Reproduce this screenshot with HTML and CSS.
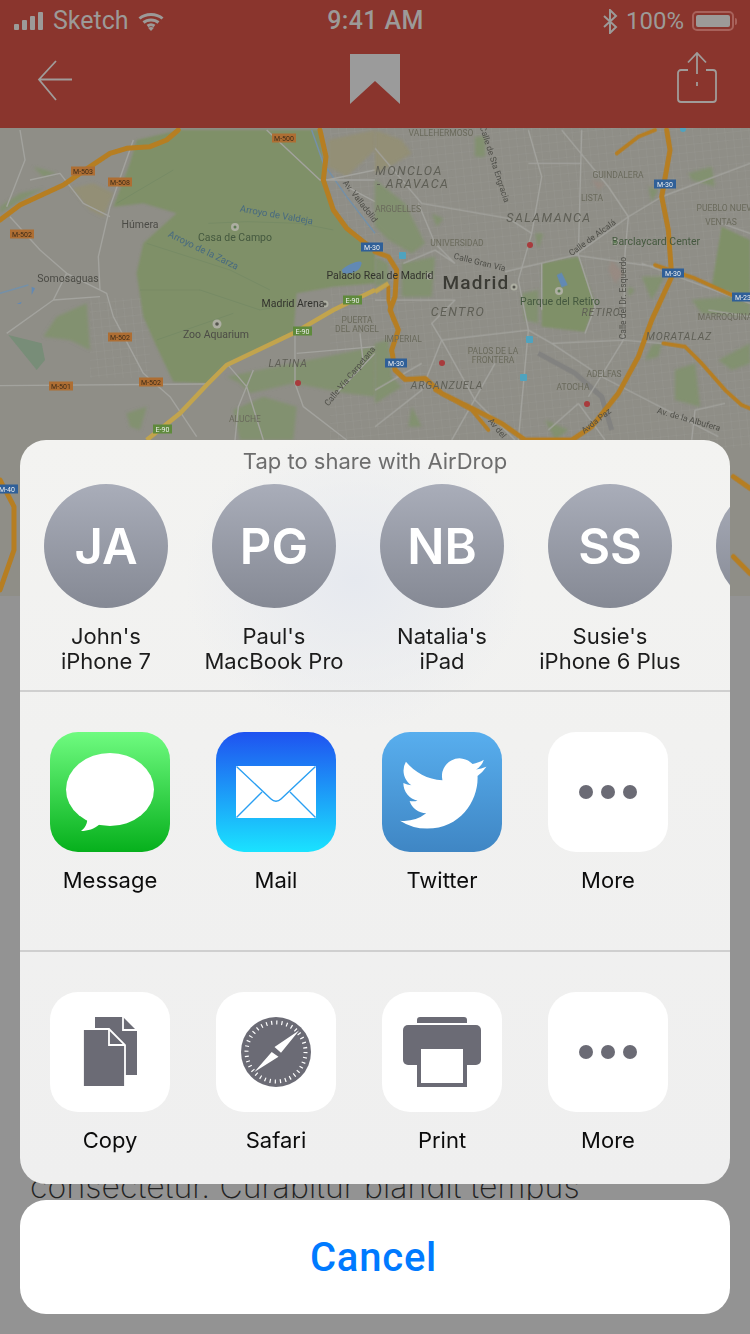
FILE: index.html
```html
<!DOCTYPE html>
<html lang="en">
<head>
<meta charset="utf-8">
<title>Share sheet</title>
<link rel="stylesheet" href="styles.css">
</head>
<body>
<div class="screen">
  <header class="topbar">
    <div class="status">
      <div class="status-left">
        <svg class="signal" width="30" height="18" viewBox="0 0 30 18"><rect x="0" y="12" width="5" height="6" rx="1"/><rect x="8" y="8" width="5" height="10" rx="1"/><rect x="16" y="4" width="5" height="14" rx="1"/><rect x="24" y="0" width="5" height="18" rx="1"/></svg>
        <span class="carrier">Sketch</span>
        <svg class="wifi" width="26" height="19" viewBox="0 0 26 19"><path d="M1.500 6.500C7.500 1 18.500 1 24.500 6.500" /><path d="M5.500 10.500C9.500 7 16.500 7 20.500 10.500"/><path d="M9.500 14C11.500 12.500 14.500 12.500 16.500 14"/><path class="wifi-dot" d="M13 19l-3-3.300c2-1 4-1 6 0z"/></svg>
      </div>
      <div class="clock">9:41 AM</div>
      <div class="status-right">
        <svg class="bt" width="17" height="25" viewBox="0 0 17 25"><path d="M2 7l12 11-6 6V1l6 6L2 18"/></svg>
        <span class="pct">100%</span>
        <span class="battery"><span class="battery-fill"></span></span>
        <span class="nub"></span>
      </div>
    </div>
    <nav class="nav">
      <svg class="nav-icon back" width="36" height="42" viewBox="0 0 36 42"><path d="M19 2L2 20.500 19 41M2 20.500H35"/></svg>
      <svg class="bookmark" width="50" height="50" viewBox="0 0 50 50"><path d="M0 0H50V50L25 27 0 50z"/></svg>
      <svg class="nav-icon" width="42" height="52" viewBox="0 0 42 52"><path d="M21 1V22M21 30V34M12 10.500L21 1l9 9.500M12 18H5a3 3 0 0 0-3 3V47a3 3 0 0 0 3 3H37a3 3 0 0 0 3-3V21a3 3 0 0 0-3-3H30"/></svg>
    </nav>
  </header>

  <svg class="map" width="750" height="468" viewBox="0 0 750 468">
    <defs>
      <pattern id="grid" width="8" height="8" patternUnits="userSpaceOnUse" patternTransform="rotate(-6)"><path d="M0 0H8M0 0V8" class="grid-line"/></pattern>
      <filter id="soft" x="-5%" y="-5%" width="110%" height="110%"><feGaussianBlur stdDeviation="0.7"/></filter>
      <filter id="softer" x="-5%" y="-5%" width="110%" height="110%"><feGaussianBlur stdDeviation="0.25"/></filter>
      <filter id="patch" x="-10%" y="-10%" width="120%" height="120%"><feGaussianBlur stdDeviation="5"/></filter>
      <filter id="edge" x="-5%" y="-5%" width="110%" height="110%"><feGaussianBlur stdDeviation="3"/></filter>
    </defs>
    <rect class="land" width="750" height="468"/>
    <g filter="url(#soft)">
      <rect class="city-grid" x="330" y="0" width="420" height="320" fill="url(#grid)"/>
      <rect class="city-grid" x="90" y="170" width="60" height="80" fill="url(#grid)"/>
      <g transform="translate(0,2) scale(.33333)">
        <path class="park" filter="url(#edge)" d="M340 230L390 100 410 30 540 0H960L975 150 1000 240 1090 340 1125 370V460L1000 470 890 490 880 610 680 700 620 760 520 755 470 650 430 560 410 430 430 340 530 250 430 220z"/>
        <path class="patch" filter="url(#patch)" d="M680 740L880 700 1125 650V800L1040 790 880 760 750 790 720 760zM700 840L790 800 890 830 880 930H720zM100 110L170 130 130 140zM0 230L60 190 130 175 40 225 0 250zM380 850L440 830 420 900 390 890z"/>
        <path class="patch" filter="url(#patch)" d="M130 620L170 560 260 520 270 660 210 630z"/>
        <path class="park-teal" d="M25 615L125 640 135 690 110 720z"/>
        <path class="tan" filter="url(#patch)" d="M215 175L280 160 340 190 310 260 270 240zM985 30L1125 0V60L1040 140 985 110z"/>
        <path class="park-line" d="M420 480L600 480 780 540 880 520M440 340L690 420 810 480M470 630L700 550M625 280L740 275 900 280 1000 300M350 220L520 120"/>
        <path class="water" d="M1025 420C1040 405 1085 385 1085 400 1080 420 1070 430 1030 432zM95 470L105 475 95 495zM50 522L65 515 62 522z"/>
        <path class="stream-line" d="M935 0L970 100 1040 200 1125 310M0 490L85 465"/>
        <path class="street" d="M60 0L75 90 40 180 20 230M30 260L120 360 200 430 320 490 340 560 430 730 510 800 590 920M400 30L330 230 295 380 300 480M0 767L620 762M200 430L160 510 20 610M160 510L300 500M680 700L740 770 790 930M760 720L715 830 705 930M885 610V760L910 830 1040 930M990 810L1125 670M890 670L1125 650M800 0L960 150 1125 150M980 150L1125 120M1040 170L1125 215M1080 610L1090 700M90 150L180 130 250 220 330 260"/>
        <path class="road" d="M0 270L60 225 190 165 240 130 330 70 380 55 450 50 500 30 535 0"/>
        <path class="road" d="M960 0L978 80 970 150 1000 240 1040 295 1090 335 1125 360"/>
        <path class="highway" d="M440 930L540 850 620 765 680 705 880 610 1000 540 1125 480"/>
        <path class="road" d="M0 1050L42 1130V1260L0 1380"/>
      </g>
      <g transform="translate(375,2) scale(.33333)">
        <path class="park" filter="url(#edge)" d="M500 400L610 380 660 520 630 605 500 590zM1040 290L1125 330V500L1010 470z"/>
        <path class="patch" filter="url(#patch)" d="M440 490L490 480 490 580 450 570zM0 150L90 220 150 340 110 370 40 330 0 290zM80 400L180 380 170 500 80 500zM0 380L40 400 40 460 0 470zM0 640L40 630 50 740 80 770 0 820zM900 720L960 700 975 830 900 810zM110 830L140 890 100 890zM300 20H330V80H300zM940 130L1010 110 1020 170 950 150zM820 170L850 180 830 215zM950 510L1070 500 1125 520V560L980 550zM800 440L870 440 830 510zM510 870L580 900 540 930zM480 310H505L490 355zM170 250L205 265 185 290zM760 470L780 480 760 500zM1030 690L1125 640V700L1070 720zM860 640L850 680 810 690 830 645z"/>
        <path class="tan" filter="url(#patch)" d="M0 0L80 30 110 70 60 100 0 130z"/>
        <path class="pink" filter="url(#patch)" d="M710 390L745 430 720 460 700 420zM650 150L690 160 670 180z"/>
        <path class="rail" d="M490 670L600 730 680 800 710 900"/>
        <path class="water" d="M545 435L560 428 578 465 560 472z"/>
        <path class="street" d="M0 55L140 220 400 265 470 310 500 140 460 0M130 220L180 340 240 400M390 425L600 375 760 260 860 200 1125 100M600 375L840 410M620 0L610 375 660 530 630 610M760 260L750 370 745 630 640 800M760 260L700 170 560 0M470 310L430 450 460 600 530 640 745 630 860 640M460 600L430 930M500 400V540M85 400L180 360 240 400M0 510H240L170 580 200 630 140 780 0 890M460 600L200 630M200 630L300 810 420 930M360 700L230 930M530 640L680 740 1030 920M610 820L520 900M610 820L690 930M1125 310L1040 280M1000 540L1125 560M800 400L1125 520M1050 820L960 840 950 930M460 100L620 100M140 700L0 780"/>
        <path class="road" d="M0 365L40 380 65 420 60 500 45 540 70 600 50 660 60 720 90 748 150 745 200 790 300 840 380 880 450 930H590L650 890 730 790 790 680 830 570 890 440 880 300 860 200 885 60 875 0"/>
        <path class="road thin" d="M40 470V510L55 570M180 780L290 840 340 900"/>
        <path class="road thin" d="M725 70L790 20 840 0M840 405L960 445 1070 495 1125 505M865 640L930 650 980 700 1050 780 1100 825 1125 835"/>
        <path class="highway" d="M0 485L40 460"/>
        <path class="road" d="M1125 1075L1075 1040M1075 1280L1125 1330"/>
      </g>
    </g>

    <g class="pois" filter="url(#softer)">
      <circle class="red" cx="530" cy="117" r="3"/><circle class="red" cx="442" cy="235" r="3"/><circle class="red" cx="298" cy="255" r="3"/><circle class="red" cx="587" cy="276" r="3"/>
      <rect class="cyan" x="399" y="124" width="7" height="7" rx="1"/><rect class="cyan" x="526" y="208" width="7" height="7" rx="1"/><rect class="cyan" x="520" y="246" width="7" height="7" rx="1"/>
      <circle class="pale" cx="235" cy="99" r="4"/><circle class="pale" cx="559" cy="163" r="4"/><circle class="pale" cx="217" cy="196" r="4.500"/><circle class="pale" cx="615" cy="114" r="3.500"/><circle class="pale" cx="514" cy="159" r="3.500"/><circle class="pale" cx="429" cy="148" r="3.500"/><circle class="pale" cx="325" cy="176" r="3.500"/>
      <circle class="poi-g" cx="235" cy="99" r="1.500"/><circle class="poi-g" cx="559" cy="163" r="1.500"/><circle class="poi-d" cx="217" cy="196" r="1.800"/><circle class="poi-g" cx="615" cy="114" r="1.500"/><circle class="poi-d" cx="514" cy="159" r="1.500"/><circle class="poi-d" cx="429" cy="148" r="1.500"/><circle class="poi-d" cx="325" cy="176" r="1.500"/>
      <circle class="cyan" cx="683" cy="1" r="3"/>
    </g>

    <g class="m-label" filter="url(#softer)">
      <text class="district" x="409" y="47">MONCLOA</text><text class="district" x="413" y="60">- ARAVACA</text>
      <text class="district" x="549" y="94">SALAMANCA</text><text class="district" x="458" y="188">CENTRO</text>
      <text class="district sm" x="601" y="188">RETIRO</text><text class="district sm" x="679" y="212">MORATALAZ</text>
      <text class="district sm" x="288" y="239">LATINA</text><text class="district sm" x="447" y="261">ARGANZUELA</text>
      <text class="hood" x="441" y="8">VALLEHERMOSO</text><text class="hood" x="618" y="50">GUINDALERA</text><text class="hood" x="592" y="73">LISTA</text>
      <text class="hood" x="727" y="83">PUEBLO NUEVO</text><text class="hood" x="721" y="97">VENTAS</text><text class="hood" x="398" y="84">ARGUELLES</text>
      <text class="hood" x="457" y="118">UNIVERSIDAD</text><text class="hood" x="357" y="195">PUERTA</text><text class="hood" x="357" y="204">DEL ANGEL</text>
      <text class="hood" x="725" y="192">MARROQUINA</text><text class="hood" x="403" y="214">IMPERIAL</text><text class="hood" x="493" y="226">PALOS DE LA</text>
      <text class="hood" x="493" y="235">FRONTERA</text><text class="hood" x="573" y="262">ATOCHA</text><text class="hood" x="604" y="249">ADELFAS</text><text class="hood" x="245" y="294">ALUCHE</text>
      <text class="place" x="140" y="100">Húmera</text><text class="place green" x="235" y="113">Casa de Campo</text><text class="place" x="68" y="154">Somosaguas</text>
      <text class="place dark" x="380" y="151">Palacio Real de Madrid</text><text class="place dark" x="293" y="179">Madrid Arena</text><text class="place" x="216" y="210">Zoo Aquarium</text>
      <text class="place green" x="656" y="117">Barclaycard Center</text><text class="place green" x="560" y="177">Parque del Retiro</text>
      <text class="city-name" x="476" y="161">Madrid</text>
      <text class="street-name" transform="translate(492,37) rotate(72)">Calle de Sta Engracia</text>
      <text class="street-name" transform="translate(594,112) rotate(-36)">Calle de Alcalá</text>
      <text class="street-name" transform="translate(479,137) rotate(14)">Calle Gran Vía</text>
      <text class="street-name" transform="translate(626,170) rotate(-90)">Calle del Dr. Esquerdo</text>
      <text class="street-name" transform="translate(352,250) rotate(-50)">Calle Vía Carpetana</text>
      <text class="street-name" transform="translate(688,294) rotate(16)">Av. de la Albufera</text>
      <text class="street-name" transform="translate(598,295) rotate(-38)">Avda Paz</text>
      <text class="street-name" transform="translate(495,302) rotate(50)">Av del</text>
      <text class="street-name" transform="translate(358,75) rotate(52)">Av. Valladolid</text>
      <text class="stream" transform="translate(276,90) rotate(10)">Arroyo de Valdeja</text>
      <text class="stream" transform="translate(202,125) rotate(26)">Arroyo de la Zarza</text>
    </g>

    <g class="shields">
      <g class="sh orange"><rect x="272" y="5.500" width="24" height="9"/><text x="284" y="12.500">M-500</text></g>
      <g class="sh orange"><rect x="71" y="38.500" width="24" height="9"/><text x="83" y="45.500">M-503</text></g>
      <g class="sh orange"><rect x="108" y="49.500" width="24" height="9"/><text x="120" y="56.500">M-508</text></g>
      <g class="sh orange"><rect x="10" y="101.500" width="24" height="9"/><text x="22" y="108.500">M-502</text></g>
      <g class="sh orange"><rect x="108" y="204.500" width="24" height="9"/><text x="120" y="211.500">M-502</text></g>
      <g class="sh orange"><rect x="139" y="249.500" width="24" height="9"/><text x="151" y="256.500">M-502</text></g>
      <g class="sh orange"><rect x="49" y="253.500" width="24" height="9"/><text x="61" y="260.500">M-501</text></g>
      <g class="sh blue"><rect x="361" y="114.500" width="22" height="9"/><text x="372" y="121.500">M-30</text></g>
      <g class="sh blue"><rect x="654" y="51.500" width="22" height="9"/><text x="665" y="58.500">M-30</text></g>
      <g class="sh blue"><rect x="662" y="140.500" width="22" height="9"/><text x="673" y="147.500">M-30</text></g>
      <g class="sh blue"><rect x="385" y="230.500" width="22" height="9"/><text x="396" y="237.500">M-30</text></g>
      <g class="sh blue"><rect x="732" y="164.500" width="22" height="9"/><text x="743" y="171.500">M-23</text></g>
      <g class="sh blue"><rect x="-4" y="356.500" width="22" height="9"/><text x="7" y="363.500">M-40</text></g>
      <g class="sh green-s"><rect x="343" y="167.500" width="19" height="9"/><text x="352.500" y="174.500">E-90</text></g>
      <g class="sh green-s"><rect x="293" y="198.500" width="19" height="9"/><text x="302.500" y="205.500">E-90</text></g>
      <g class="sh green-s"><rect x="153" y="296.500" width="19" height="9"/><text x="162.500" y="303.500">E-90</text></g>
    </g>
  </svg>

  <article class="article"><p class="body-line">consectetur. Curabitur blandit tempus</p></article>

  <section class="sheet">
    <div class="airdrop">
      <h2 class="airdrop-title">Tap to share with AirDrop</h2>
      <ul class="people">
        <li class="person"><span class="avatar">JA</span><span class="person-name">John's<br>iPhone 7</span></li>
        <li class="person"><span class="avatar">PG</span><span class="person-name">Paul's<br>MacBook Pro</span></li>
        <li class="person"><span class="avatar">NB</span><span class="person-name">Natalia's<br>iPad</span></li>
        <li class="person"><span class="avatar">SS</span><span class="person-name">Susie's<br>iPhone 6 Plus</span></li>
        <li class="person"><span class="avatar"></span></li>
      </ul>
    </div>

    <ul class="apps">
      <li class="app">
        <svg class="tile" width="120" height="120" viewBox="0 0 120 120"><defs><linearGradient id="gm" x1="0" y1="0" x2="0" y2="1"><stop offset="0" stop-color="#6ffb80"/><stop offset="1" stop-color="#06b01c"/></linearGradient></defs><rect width="120" height="120" rx="28" fill="url(#gm)"/><ellipse cx="60" cy="57.500" rx="44" ry="36.500" fill="#fff"/><path d="M37 86C38 91 35 96 31 99 38 99 44 97 50 92z" fill="#fff"/></svg>
        <span class="app-label">Message</span>
      </li>
      <li class="app">
        <svg class="tile" width="120" height="120" viewBox="0 0 120 120"><defs><linearGradient id="gb" x1="0" y1="0" x2="0" y2="1"><stop offset="0" stop-color="#1f52f0"/><stop offset="1" stop-color="#1ae3ff"/></linearGradient></defs><rect width="120" height="120" rx="28" fill="url(#gb)"/><rect x="20" y="34" width="80" height="52" fill="#fff"/><path d="M20.500 34.500L55 67C58 70 62 70 65 67L99.500 34.500M20.500 85.500L46 60M99.500 85.500L74 60" fill="none" stroke="#2a9ff2" stroke-width="1.400"/></svg>
        <span class="app-label">Mail</span>
      </li>
      <li class="app">
        <svg class="tile" width="120" height="120" viewBox="0 0 120 120"><defs><linearGradient id="gt" x1="0" y1="0" x2="0" y2="1"><stop offset="0" stop-color="#58aeee"/><stop offset="1" stop-color="#3f86c4"/></linearGradient></defs><rect width="120" height="120" rx="28" fill="url(#gt)"/><g transform="translate(18,18.300) scale(3.600)"><path fill="#fff" d="M23.953 4.570a10 10 0 0 1-2.825.775 4.958 4.958 0 0 0 2.163-2.723c-.951.555-2.005.959-3.127 1.184a4.920 4.920 0 0 0-8.384 4.482C7.690 8.095 4.067 6.130 1.640 3.162a4.822 4.822 0 0 0-.666 2.475c0 1.710.870 3.213 2.188 4.096a4.904 4.904 0 0 1-2.228-.616v.060a4.923 4.923 0 0 0 3.946 4.827 4.996 4.996 0 0 1-2.212.085 4.936 4.936 0 0 0 4.604 3.417 9.867 9.867 0 0 1-6.102 2.105c-.390 0-.779-.023-1.170-.067a13.995 13.995 0 0 0 7.557 2.209c9.053 0 13.998-7.496 13.998-13.985 0-.210 0-.420-.015-.630A9.935 9.935 0 0 0 24 4.590z"/></g></svg>
        <span class="app-label">Twitter</span>
      </li>
      <li class="app">
        <svg class="tile" width="120" height="120" viewBox="0 0 120 120"><rect width="120" height="120" rx="28" fill="#fff"/><g class="glyph"><circle cx="38" cy="60" r="7"/><circle cx="60" cy="60" r="7"/><circle cx="82" cy="60" r="7"/></g></svg>
        <span class="app-label">More</span>
      </li>
    </ul>

    <ul class="apps last">
      <li class="app">
        <svg class="tile" width="120" height="120" viewBox="0 0 120 120"><rect width="120" height="120" rx="28" fill="#fff"/><g class="glyph"><path d="M45 25H73L87 39V83H45z"/><path class="cut" d="M73 25V38H87"/><path class="frontdoc" d="M33 37H59L75 53V95H33z"/><path class="cut" d="M59 37V53H75"/></g></svg>
        <span class="app-label">Copy</span>
      </li>
      <li class="app">
        <svg class="tile" width="120" height="120" viewBox="0 0 120 120"><rect width="120" height="120" rx="28" fill="#fff"/><g class="glyph"><circle cx="60" cy="60" r="35"/></g><circle class="ticks" cx="60" cy="60" r="29.500"/><path fill="#fff" d="M83.300 38.300L58.500 55 65 60.700zM38.300 80L55.700 60 62.500 64.700z"/></svg>
        <span class="app-label">Safari</span>
      </li>
      <li class="app">
        <svg class="tile" width="120" height="120" viewBox="0 0 120 120"><rect width="120" height="120" rx="28" fill="#fff"/><g class="glyph"><path d="M35 31V28a3 3 0 0 1 3-3H82a3 3 0 0 1 3 3V31z"/><rect x="21" y="33" width="78" height="40" rx="5"/><rect x="35" y="57" width="50" height="38"/></g><rect x="39" y="57" width="42" height="34" fill="#fff"/></svg>
        <span class="app-label">Print</span>
      </li>
      <li class="app">
        <svg class="tile" width="120" height="120" viewBox="0 0 120 120"><rect width="120" height="120" rx="28" fill="#fff"/><g class="glyph"><circle cx="38" cy="60" r="7"/><circle cx="60" cy="60" r="7"/><circle cx="82" cy="60" r="7"/></g></svg>
        <span class="app-label">More</span>
      </li>
    </ul>
  </section>

  <button class="cancel" type="button">Cancel</button>
</div>
</body>
</html>
```

FILE: styles.css
```css
* { box-sizing: border-box; }
html, body { margin: 0; padding: 0; }
body { width: 750px; height: 1334px; overflow: hidden; background: #939393; font-family: Inter, "Liberation Sans", sans-serif; }
ul { list-style: none; margin: 0; padding: 0; }
.screen { position: relative; width: 750px; height: 1334px; overflow: hidden; background: #939393; }

.topbar { height: 128px; background: #8a352d; color: #9c9a98; }
.status { display: grid; grid-template-columns: 1fr auto 1fr; align-items: center; height: 40px; padding: 1px 13px 0 14px; }
.status-left { display: flex; align-items: center; }
.signal { fill: #9c9a98; margin-right: 9px; }
.carrier { font-family: Roboto, sans-serif; font-size: 25px; line-height: 40px; }
.wifi { margin-left: 9px; fill: none; stroke: #9c9a98; stroke-width: 3; }
.wifi-dot { fill: #9c9a98; stroke: none; }
.clock { font-family: Roboto, sans-serif; font-size: 25px; font-weight: 500; line-height: 40px; letter-spacing: .4px; }
.status-right { display: flex; align-items: center; justify-content: flex-end; }
.bt { fill: none; stroke: #9c9a98; stroke-width: 2; margin-right: 7px; }
.pct { font-family: Roboto, sans-serif; font-size: 24px; line-height: 40px; margin-right: 8px; }
.battery { display: block; width: 42px; height: 20px; border: 2px solid #a8625b; border-radius: 5px; padding: 2px; }
.battery-fill { display: block; height: 100%; background: #9c9a98; border-radius: 2px; }
.nub { display: block; width: 2px; height: 7px; margin-left: 1px; background: #a8625b; border-radius: 0 2px 2px 0; }

.nav { display: flex; justify-content: space-between; align-items: flex-start; height: 88px; padding: 14px 32px 0 37px; }
.nav-icon { fill: none; stroke: #a09c9a; stroke-width: 1.800; margin-top: -2px; }
.nav-icon.back { margin-top: 5px; }
.bookmark { fill: #9b9b9b; display: block; }

.map { display: block; }
.land { fill: #8f8e87; }
.park { fill: #7f9068; }
.patch { fill: #829170; }
.park-teal { fill: #788d78; }
.tan { fill: #938f76; }
.pink { fill: #978a82; }
.park-line { fill: none; stroke: #778b65; stroke-width: 1; vector-effect: non-scaling-stroke; }
.water { fill: #6289b4; }
.stream-line { fill: none; stroke: #7490a8; stroke-width: 1.500; vector-effect: non-scaling-stroke; }
.rail { fill: none; stroke: #828280; stroke-width: 5; vector-effect: non-scaling-stroke; }
.street { fill: none; stroke: #a3a39e; stroke-width: 1.400; vector-effect: non-scaling-stroke; stroke-linejoin: round; }
.road { fill: none; stroke: #b67e22; stroke-width: 5; vector-effect: non-scaling-stroke; stroke-linejoin: round; stroke-linecap: round; }
.road.thin { stroke-width: 3.800; }
.highway { fill: none; stroke: #c2a44d; stroke-width: 4.500; vector-effect: non-scaling-stroke; }
.grid-line { fill: none; stroke: #9d9c96; stroke-width: 0.700; }
.city-grid { opacity: .7; }
.red { fill: #a83a3c; }
.cyan { fill: #4fa3bf; }
.pale { fill: #adaea2; }
.poi-g { fill: #5d7d52; }
.poi-d { fill: #55554f; }

.m-label text { font-family: Roboto, sans-serif; text-anchor: middle; fill: #5f5f56; }
.m-label .district { font-size: 12.500px; letter-spacing: 1.400px; font-style: italic; }
.m-label .district.sm { font-size: 10.500px; letter-spacing: .8px; }
.m-label .hood { font-size: 8.500px; fill: #6a6a5c; }
.m-label .place { font-size: 10.500px; fill: #4c4c46; }
.m-label .place.dark { fill: #33332e; }
.m-label .place.green { fill: #45593f; }
.m-label .city-name { font-size: 19px; font-weight: 500; fill: #3a3a34; letter-spacing: 1.200px; }
.m-label .street-name { font-size: 8.500px; fill: #4f4f49; }
.m-label .stream { font-size: 9.500px; fill: #476a80; }
.sh text { font-family: Roboto, sans-serif; font-size: 7px; text-anchor: middle; fill: #eee; }
.sh.orange rect { fill: #ae6e33; }
.sh.orange text { fill: #3e2c18; }
.sh.blue rect { fill: #2f5f98; }
.sh.green-s rect { fill: #5f8a3c; }

.article { padding: 571px 30px 0; }
.body-line { margin: 0; font-family: Inter, sans-serif; font-weight: 250; font-size: 32px; line-height: 40px; letter-spacing: .1px; color: #222; white-space: nowrap; }

.sheet { position: absolute; left: 20px; top: 440px; width: 710px; height: 744px; overflow: hidden; border-radius: 26px; background: radial-gradient(ellipse 170px 150px at 335px 140px, #e6e9ef 0%, rgba(240,241,242,0) 100%), linear-gradient(#f3f3f1, #f1f1f0 40%, #efefef); display: flex; flex-direction: column; }
.airdrop { height: 252px; border-bottom: 2px solid #cfcfcf; flex: none; overflow: hidden; }
.airdrop-title { margin: 8px 0 0; height: 26px; text-align: center; font-weight: 375; font-size: 22px; line-height: 26px; color: #6d6d6d; }
.people { display: flex; gap: 44px; padding: 10px 0 0 24px; width: 900px; }
.person { width: 124px; flex: none; display: flex; flex-direction: column; align-items: center; }
.avatar { width: 124px; height: 124px; border-radius: 50%; display: flex; align-items: center; justify-content: center; background: linear-gradient(#a9adb9, #858994); color: #fff; font-size: 49px; font-weight: 600; }
.person-name { margin-top: 16px; width: 180px; text-align: center; font-size: 22px; font-weight: 375; line-height: 25px; color: #1c1c1c; }

.apps { height: 260px; flex: none; display: flex; gap: 46px; padding: 40px 0 0 30px; border-bottom: 2px solid #cfcfcf; }
.apps.last { border-bottom: 0; }
.app { width: 120px; flex: none; display: flex; flex-direction: column; align-items: center; }
.tile { display: block; }
.app-label { margin-top: 15px; font-size: 22px; font-weight: 375; line-height: 26px; color: #0c0c0c; }
.glyph { fill: #6b6b75; }
.cut { fill: none; stroke: #fff; stroke-width: 1.800; }
.frontdoc { stroke: #fff; stroke-width: 1.800; }
.ticks { fill: none; stroke: #fff; stroke-width: 4; stroke-dasharray: 1.200 3.949; }

.cancel { position: absolute; left: 20px; top: 1200px; width: 710px; height: 114px; border: 0; border-radius: 26px; background: #fff; color: #007aff; font-family: Roboto, sans-serif; font-size: 40px; font-weight: 500; letter-spacing: .8px; padding: 0 3px 0 0; }
```
